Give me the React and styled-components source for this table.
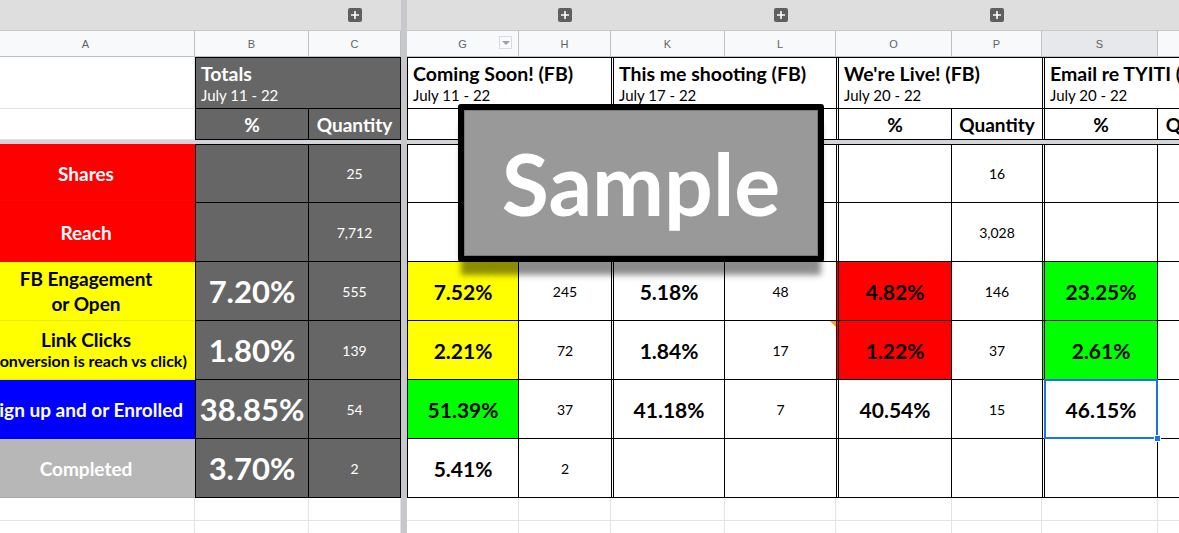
import React from 'react'
import styled, { createGlobalStyle } from 'styled-components'

const GlobalStyle = createGlobalStyle`
  html, body {
    margin: 0;
    padding: 0;
    overflow: hidden;
    background: #fff;
  }
  body {
    font-family: Lato, "Open Sans", sans-serif;
  }
`

const RED = '#ff0000'
const YELLOW = '#ffff00'
const GREEN = '#00ff00'
const BLUE = '#0000ff'
const TOTAL_GRAY = '#666666'

// sheet columns: A B C | freeze | G H K L O P S T
const Sheet = styled.div`
  display: grid;
  grid-template-columns: 218px 114px 92px 6px 112px 92px 114px 111px 116px 90px 116px 92px;
  grid-template-rows: 31px 26px 52px 31px 4px repeat(6, 59px) 23px 23px;
  width: max-content;
  margin-left: -23px;
  position: relative;
`

const FreezeV = styled.div`
  grid-column: 4;
  grid-row: 1 / -1;
  background: #c6c8cb;
  z-index: 2;
`

const FreezeH = styled.div`
  grid-column: 1 / -1;
  grid-row: 5;
  background: #d3d5d8;
  z-index: 1;
`

const GroupCell = styled.div`
  box-sizing: border-box;
  background: #dedede;
  border-bottom: 1px solid #c8c8c8;
  display: flex;
  align-items: center;
  justify-content: center;
`

const PlusBox = styled.span`
  width: 14px;
  height: 14px;
  border-radius: 2px;
  background: #5f5f5f;
  display: flex;
  align-items: center;
  justify-content: center;
`

const ColHeader = styled.div`
  box-sizing: border-box;
  position: relative;
  background: ${p => (p.$selected ? '#e6e8eb' : '#f8f9fa')};
  border-right: 1px solid #c0c0c0;
  border-bottom: 1px solid #c0c0c0;
  display: flex;
  align-items: center;
  justify-content: center;
  font: 11px "Liberation Sans", Arial, sans-serif;
  color: #5f6368;
`

const FilterButton = styled.span`
  position: absolute;
  right: 6px;
  top: 5px;
  width: 13px;
  height: 13px;
  box-sizing: border-box;
  border: 1px solid #dadce0;
  display: flex;
  align-items: center;
  justify-content: center;
  &::after {
    content: '';
    border-left: 4px solid transparent;
    border-right: 4px solid transparent;
    border-top: 4px solid #9aa0a6;
  }
`

const GridCell = styled.div`
  box-sizing: border-box;
  background: #fff;
  border-right: 1px solid #e2e3e3;
  border-bottom: 1px solid #e2e3e3;
`

const LabelCell = styled.div`
  box-sizing: border-box;
  background: ${p => p.$bg};
  color: ${p => p.$fg};
  border-bottom: 1px solid rgba(0, 0, 0, 0.08);
  display: flex;
  flex-direction: column;
  align-items: center;
  justify-content: center;
  white-space: nowrap;
  font-weight: 700;
  font-size: 19px;
  line-height: ${p => (p.$tight ? '21px' : '25px')};
`

const SubLine = styled.span`
  font-size: 16px;
`

const edges = {
  single: '1px solid #000',
  double: '3px double #000',
  none: 'none',
}

const Cell = styled.div`
  box-sizing: border-box;
  position: relative;
  background: ${p => p.$bg || '#fff'};
  color: ${p => p.$fg || '#000'};
  border-left: ${p => edges[p.$edge || 'none']};
  border-right: ${p => (p.$open ? 'none' : '1px solid #000')};
  border-bottom: 1px solid #000;
  border-top: ${p => (p.$top ? '1px solid #000' : 'none')};
  display: flex;
  align-items: center;
  justify-content: center;
  white-space: nowrap;
  font-size: ${p => (p.$big ? '31px' : p.$pct ? '21px' : '14px')};
  font-weight: ${p => (p.$big || p.$pct ? 700 : 400)};
`

const TitleCell = styled(Cell)`
  grid-column: span 2;
  flex-direction: column;
  align-items: flex-start;
  justify-content: flex-end;
  padding: 0 0 3px 5px;
  overflow: hidden;
`

const TitleText = styled.div`
  font-size: 19.5px;
  font-weight: 700;
  line-height: 22px;
`

const DateText = styled.div`
  font-size: 15px;
  line-height: 20px;
`

const SubHead = styled(Cell)`
  font-size: 19px;
  font-weight: 700;
`

const Selection = styled.div`
  position: absolute;
  inset: -1px -1px -1px -1px;
  border: 2px solid #1a73e8;
  pointer-events: none;
  z-index: 3;
  &::after {
    content: '';
    position: absolute;
    right: -5px;
    bottom: -5px;
    width: 7px;
    height: 7px;
    background: #1a73e8;
    border: 1px solid #fff;
    box-sizing: border-box;
  }
`

const CommentMark = styled.span`
  position: absolute;
  top: 0;
  right: 0;
  border-top: 6px solid #f6a800;
  border-left: 6px solid transparent;
`

const SampleStamp = styled.div`
  position: absolute;
  left: 481px;
  top: 104px;
  width: 366px;
  height: 158px;
  box-sizing: border-box;
  background: #999999;
  border: 6px solid #000;
  border-radius: 3px;
  box-shadow: inset 0 0 0 1px #7a7a7a, 0 16px 6px -3px rgba(0, 0, 0, 0.45);
  display: flex;
  align-items: center;
  justify-content: center;
  color: #fff;
  font: 700 86px/1 Lato, "Open Sans", sans-serif;
  z-index: 5;
`

const Plus = () => (
  <PlusBox>
    <svg width="8" height="8" viewBox="0 0 8 8">
      <path d="M4 0v8M0 4h8" stroke="#fff" strokeWidth="1.6" />
    </svg>
  </PlusBox>
)

// column keys excluding the freeze column
const columns = ['A', 'B', 'C', 'G', 'H', 'K', 'L', 'O', 'P', 'S', 'T']
const groupToggles = ['C', 'H', 'L', 'P']

// border style per table column
const colEdge = {
  B: { edge: 'single' },
  C: {},
  G: { edge: 'single' },
  H: { open: true },
  K: { edge: 'double' },
  L: { open: true },
  O: { edge: 'double' },
  P: { open: true },
  S: { edge: 'double' },
  T: {},
}

const labels = [
  { bg: RED, fg: '#fff', lines: ['Shares'] },
  { bg: RED, fg: '#fff', lines: ['Reach'] },
  { bg: YELLOW, fg: '#000', lines: ['FB Engagement', 'or Open'] },
  { bg: YELLOW, fg: '#000', lines: ['Link Clicks'], sub: '(Conversion is reach vs click)' },
  { bg: BLUE, fg: '#fff', lines: ['Sign up and or Enrolled'] },
  { bg: '#b7b7b7', fg: '#fff', lines: ['Completed'] },
]

const titles = [
  { name: 'Coming Soon! (FB)', dates: 'July 11 - 22', edge: 'single', open: true },
  { name: 'This me shooting (FB)', dates: 'July 17 - 22', edge: 'double', open: true },
  { name: "We're Live! (FB)", dates: 'July 20 - 22', edge: 'double', open: true },
  { name: 'Email re TYITI (Email)', dates: 'July 20 - 22', edge: 'double' },
]

const subHeads = { B: '%', C: 'Quantity', G: '', H: '', K: '', L: '', O: '%', P: 'Quantity', S: '%', T: 'Quantity' }

// values per row: [pct, bg] for percentage columns, plain strings for quantities
const rows = [
  { B: '', C: '25', G: '', H: '', K: '', L: '', O: '', P: '16', S: '', T: '' },
  { B: '', C: '7,712', G: '', H: '', K: '', L: '', O: '', P: '3,028', S: '', T: '' },
  { B: '7.20%', C: '555', G: ['7.52%', YELLOW], H: '245', K: ['5.18%'], L: '48', O: ['4.82%', RED], P: '146', S: ['23.25%', GREEN], T: '' },
  { B: '1.80%', C: '139', G: ['2.21%', YELLOW], H: '72', K: ['1.84%'], L: '17', O: ['1.22%', RED], P: '37', S: ['2.61%', GREEN], T: '' },
  { B: '38.85%', C: '54', G: ['51.39%', GREEN], H: '37', K: ['41.18%'], L: '7', O: ['40.54%'], P: '15', S: ['46.15%'], T: '' },
  { B: '3.70%', C: '2', G: ['5.41%'], H: '2', K: [''], L: '', O: [''], P: '', S: [''], T: '' },
]

function DataRow({ row, label, index }) {
  const top = index === 0
  return (
    <>
      <LabelCell $bg={label.bg} $fg={label.fg} $tight={!!label.sub}>
        {label.lines.map(l => (
          <span key={l}>{l}</span>
        ))}
        {label.sub && <SubLine>{label.sub}</SubLine>}
      </LabelCell>
      {columns.slice(1).map(col => {
        const v = row[col]
        const e = colEdge[col]
        if (col === 'B' || col === 'C') {
          return (
            <Cell key={col} $edge={e.edge} $open={e.open} $top={top} $bg={TOTAL_GRAY} $fg="#fff" $big={col === 'B'}>
              {v}
            </Cell>
          )
        }
        const isPct = Array.isArray(v)
        return (
          <Cell
            key={col}
            $edge={e.edge}
            $open={e.open}
            $top={top}
            $pct={isPct}
            $bg={isPct ? v[1] : undefined}
          >
            {isPct ? v[0] : v}
            {col === 'S' && index === 4 && <Selection />}
            {col === 'L' && index === 3 && <CommentMark />}
          </Cell>
        )
      })}
    </>
  )
}

export default function App() {
  return (
    <>
      <GlobalStyle />
      <Sheet>
        <FreezeV />
        <FreezeH />

        {columns.map(col => (
          <GroupCell key={'g' + col}>{groupToggles.includes(col) && <Plus />}</GroupCell>
        ))}

        {columns.map(col => (
          <ColHeader key={'h' + col} $selected={col === 'S'}>
            {col}
            {col === 'G' && <FilterButton />}
          </ColHeader>
        ))}

        <GridCell />
        <TitleCell $edge="single" $top $bg={TOTAL_GRAY} $fg="#fff">
          <TitleText>Totals</TitleText>
          <DateText>July 11 - 22</DateText>
        </TitleCell>
        {titles.map(t => (
          <TitleCell key={t.name} $edge={t.edge} $open={t.open} $top>
            <TitleText>{t.name}</TitleText>
            <DateText>{t.dates}</DateText>
          </TitleCell>
        ))}

        <GridCell />
        {columns.slice(1).map(col => {
          const e = colEdge[col]
          const totals = col === 'B' || col === 'C'
          return (
            <SubHead
              key={'s' + col}
              $edge={e.edge}
              $open={e.open}
              $bg={totals ? TOTAL_GRAY : undefined}
              $fg={totals ? '#fff' : undefined}
            >
              {subHeads[col]}
            </SubHead>
          )
        })}

        {rows.map((row, i) => (
          <DataRow key={i} row={row} label={labels[i]} index={i} />
        ))}

        {[0, 1].map(r =>
          columns.map(col => <GridCell key={'e' + r + col} />)
        )}

        <SampleStamp>Sample</SampleStamp>
      </Sheet>
    </>
  )
}
